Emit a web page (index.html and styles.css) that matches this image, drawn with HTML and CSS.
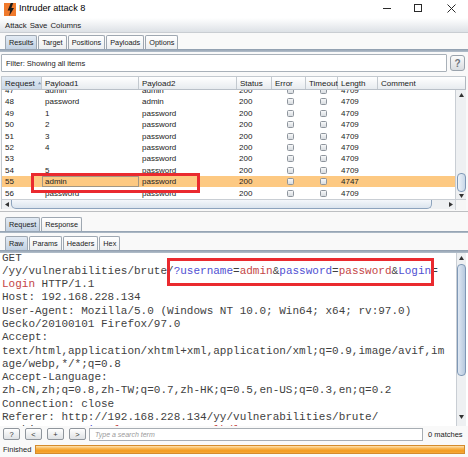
FILE: index.html
```html
<!DOCTYPE html>
<html>
<head>
<meta charset="utf-8">
<title>Intruder attack 8</title>
<link rel="stylesheet" href="styles.css">
</head>
<body>
<div class="window">
  <header class="titlebar">
    <svg class="app-icon" width="12" height="13" viewBox="0 0 12 13"><rect x="0" y="0" width="12" height="13" fill="#f07a2c"/><path d="M6.8 0 L9.2 0 L7.4 5 L10 5 L5.2 13 L6.2 7.4 L3.6 7.4 Z" fill="#1b1b1b"/></svg>
    <span class="title">Intruder attack 8</span>
    <div class="controls">
      <span class="ctl ctl-min"><svg width="8" height="8" viewBox="0 0 8 8"><path d="M0 4.5H8" stroke="#2a2a2a" stroke-width="1"/></svg></span>
      <span class="ctl ctl-max"><svg width="8" height="8" viewBox="0 0 8 8"><rect x="0.5" y="0.5" width="7" height="7" fill="none" stroke="#2a2a2a" stroke-width="1"/></svg></span>
      <span class="ctl ctl-close"><svg width="9" height="9" viewBox="0 0 9 9"><path d="M0.5 0.5L8.5 8.5M8.5 0.5L0.5 8.5" stroke="#2a2a2a" stroke-width="1"/></svg></span>
    </div>
  </header>

  <nav class="menubar"><span>Attack</span><span>Save</span><span>Columns</span></nav>

  <div class="tabstrip main-tabs">
    <span class="tab active">Results</span>
    <span class="tab">Target</span>
    <span class="tab">Positions</span>
    <span class="tab">Payloads</span>
    <span class="tab">Options</span>
  </div>
  <div class="tabline thick"></div>

  <div class="filter-row">
    <div class="filter">Filter: Showing all items</div>
    <div class="help">?</div>
  </div>

  <div class="table">
    <div class="thead">
      <div class="th sorted">Request <svg class="sort" width="5" height="4" viewBox="0 0 5 4"><path d="M2.5 0L5 4H0Z" fill="#7b91ab"/></svg></div>
      <div class="th">Payload1</div>
      <div class="th">Payload2</div>
      <div class="th">Status</div>
      <div class="th">Error</div>
      <div class="th">Timeout</div>
      <div class="th">Length</div>
      <div class="th last">Comment</div>
    </div>
    <div class="tbody-wrap">
      <div class="tbody">
        <div class="rows">
          <div class="row"><span>47</span><span>admin</span><span>admin</span><span>200</span><span class="c"><i class="cb"></i></span><span class="c"><i class="cb"></i></span><span>4709</span><span></span></div>
          <div class="row"><span>48</span><span>password</span><span>admin</span><span>200</span><span class="c"><i class="cb"></i></span><span class="c"><i class="cb"></i></span><span>4709</span><span></span></div>
          <div class="row"><span>49</span><span>1</span><span>password</span><span>200</span><span class="c"><i class="cb"></i></span><span class="c"><i class="cb"></i></span><span>4709</span><span></span></div>
          <div class="row"><span>50</span><span>2</span><span>password</span><span>200</span><span class="c"><i class="cb"></i></span><span class="c"><i class="cb"></i></span><span>4709</span><span></span></div>
          <div class="row"><span>51</span><span>3</span><span>password</span><span>200</span><span class="c"><i class="cb"></i></span><span class="c"><i class="cb"></i></span><span>4709</span><span></span></div>
          <div class="row"><span>52</span><span>4</span><span>password</span><span>200</span><span class="c"><i class="cb"></i></span><span class="c"><i class="cb"></i></span><span>4709</span><span></span></div>
          <div class="row"><span>53</span><span></span><span>password</span><span>200</span><span class="c"><i class="cb"></i></span><span class="c"><i class="cb"></i></span><span>4709</span><span></span></div>
          <div class="row"><span>54</span><span>5</span><span>password</span><span>200</span><span class="c"><i class="cb"></i></span><span class="c"><i class="cb"></i></span><span>4709</span><span></span></div>
          <div class="row sel"><span>55</span><span class="focus">admin</span><span>password</span><span>200</span><span class="c"><i class="cb"></i></span><span class="c"><i class="cb"></i></span><span>4747</span><span></span></div>
          <div class="row"><span>56</span><span>password</span><span>password</span><span>200</span><span class="c"><i class="cb"></i></span><span class="c"><i class="cb"></i></span><span>4709</span><span></span></div>
        </div>
      </div>
      <div class="vscroll small">
        <span class="arr up"><svg width="5" height="4" viewBox="0 0 5 4"><path d="M2.5 0L5 4H0Z" fill="#333"/></svg></span>
        <span class="track"></span>
        <span class="thumb"></span>
        <span class="arr down"><svg width="5" height="4" viewBox="0 0 5 4"><path d="M0 0H5L2.5 4Z" fill="#333"/></svg></span>
      </div>
    </div>
    <div class="hscroll">
      <span class="harr"><svg width="4" height="5" viewBox="0 0 4 5"><path d="M4 0V5L0 2.5Z" fill="#333"/></svg></span>
      <span class="hthumb"></span>
      <span class="hgrip"></span>
      <span class="harr right"><svg width="4" height="5" viewBox="0 0 4 5"><path d="M0 0V5L4 2.5Z" fill="#333"/></svg></span>
      <span class="corner"></span>
    </div>
  </div>

  <div class="splitter"></div>

  <div class="tabstrip sub-tabs">
    <span class="tab active">Request</span>
    <span class="tab">Response</span>
  </div>
  <div class="tabline"></div>

  <div class="tabstrip raw-tabs">
    <span class="tab active">Raw</span>
    <span class="tab">Params</span>
    <span class="tab">Headers</span>
    <span class="tab">Hex</span>
  </div>
  <div class="tabline thick"></div>

  <div class="editor">
<pre class="raw">GET
/yy/vulnerabilities/brute/<span class="k">?username</span>=<span class="v">admin</span>&amp;<span class="k">password</span>=<span class="v">password</span>&amp;<span class="k">Login</span>=
<span class="v">Login</span> HTTP/1.1
Host: 192.168.228.134
User-Agent: Mozilla/5.0 (Windows NT 10.0; Win64; x64; rv:97.0)
Gecko/20100101 Firefox/97.0
Accept:
text/html,application/xhtml+xml,application/xml;q=0.9,image/avif,im
age/webp,*/*;q=0.8
Accept-Language:
zh-CN,zh;q=0.8,zh-TW;q=0.7,zh-HK;q=0.5,en-US;q=0.3,en;q=0.2
Connection: close
Referer: http://192.168.228.134/yy/vulnerabilities/brute/
Cookie: <span class="k">security</span>=<span class="v">low</span>; <span class="k">PHPSESSID</span>=<span class="v">lkdl0153c6a9e7e6c0e2a1</span></pre>
    <div class="vscroll big">
      <span class="arr up"><svg width="5" height="4" viewBox="0 0 5 4"><path d="M2.5 0L5 4H0Z" fill="#333"/></svg></span>
      <span class="thumb"></span>
      <span class="track"></span>
      <span class="arr down"><svg width="5" height="4" viewBox="0 0 5 4"><path d="M0 0H5L2.5 4Z" fill="#333"/></svg></span>
    </div>
  </div>

  <div class="searchbar">
    <span class="btn">?</span>
    <span class="btn">&lt;</span>
    <span class="btn">+</span>
    <span class="btn">&gt;</span>
    <span class="search">Type a search term</span>
    <span class="matches">0 matches</span>
  </div>

  <div class="statusbar">
    <span class="status-label">Finished</span>
    <span class="progress"></span>
  </div>

  <div class="mark mark-row"></div>
  <div class="mark mark-query"></div>
</div>
</body>
</html>
```

FILE: styles.css
```css
* { box-sizing: border-box; margin: 0; padding: 0; }
html, body { width: 468px; height: 457px; overflow: hidden; }
body {
  background: #ffffff;
  font-family: "Liberation Sans", Arial, sans-serif;
  font-size: 7.5px;
  color: #1c1c1c;
}
.window {
  position: relative;
  width: 468px;
  height: 457px;
  background: #f9f9f9;
  display: flex;
  flex-direction: column;
}

/* title bar */
.titlebar {
  height: 18px;
  flex: none;
  background: #ffffff;
  display: flex;
  align-items: flex-start;
  padding-left: 4px;
  padding-top: 3px;
}
.app-icon { display: block; margin-right: 3px; }
.title { font-size: 9.2px; color: #000; line-height: 11px; }
.controls { margin-left: auto; display: flex; margin-top: 1px; }
.ctl { display: flex; justify-content: center; height: 10px; }
.ctl svg { display: block; }
.ctl-min { width: 31px; }
.ctl-max { width: 32px; }
.ctl-close { width: 34px; }

/* menu */
.menubar {
  height: 15px;
  flex: none;
  background: linear-gradient(#ffffff, #dde1e6);
  border-bottom: 1px solid #c9cdd2;
  display: flex;
  align-items: center;
  gap: 3px;
  padding-left: 5px;
  font-size: 7.8px;
}

/* tabs */
.tabstrip { display: flex; align-items: flex-end; padding-left: 5px; flex: none; }
.main-tabs { height: 16px; }
.sub-tabs { height: 15px; }
.raw-tabs { height: 14px; margin-top: 3px; }
.tab {
  height: 14px;
  padding: 0 3px;
  margin-right: 1px;
  border: 1px solid #9ea7b1;
  border-bottom: none;
  border-radius: 2px 2px 0 0;
  background: linear-gradient(#ffffff, #eceef0);
  display: flex;
  align-items: center;
  font-size: 7.3px;
  color: #1a1a1a;
}
.tab.active { background: linear-gradient(#e3ebf4, #c2d1e2); }
.tabline { height: 2px; flex: none; background: linear-gradient(#8e9cad, #b3bfcb); }
.tabline.thick { height: 3px; }

/* filter */
.filter-row {
  display: flex;
  height: 18px;
  margin-top: 2px;
  padding-left: 1px;
  flex: none;
}
.filter {
  width: 446px;
  border: 1px solid #a9b1b9;
  border-radius: 1px;
  background: #ffffff;
  display: flex;
  align-items: center;
  padding-left: 4px;
}
.help {
  width: 15px;
  height: 16px;
  margin: 1px 0 0 3px;
  border: 1px solid #9aa3ad;
  border-radius: 3px;
  background: linear-gradient(#fbfbfb, #d9dde1);
  color: #6f757c;
  font-weight: bold;
  font-size: 10px;
  display: flex;
  align-items: center;
  justify-content: center;
}

/* table */
.table {
  width: 465px;
  margin: 4px 0 0 1px;
  flex: none;
  display: flex;
  flex-direction: column;
}
.thead {
  height: 14px;
  display: grid;
  grid-template-columns: 40px 97px 98px 35px 34px 32px 40px 1fr;
  background: linear-gradient(#ffffff, #e7ebef);
  border-top: 1px solid #c3c9cf;
  border-bottom: 1px solid #b9c0c8;
  border-left: 1px solid #c3c9cf;
}
.th {
  display: flex;
  align-items: center;
  padding-left: 3px;
  border-right: 1px solid #c3c9cf;
  font-size: 8px;
  color: #1a1a1a;
}
.th.last { border-right: 1px solid #b0b7bf; }
.th.sorted { background: linear-gradient(#e3ebf4, #c9d7e7); }
.sort { margin-left: 3px; }
.tbody-wrap {
  height: 109px;
  display: flex;
  border-left: 1px solid #c3c9cf;
}
.tbody { width: 454px; overflow: hidden; background: #ffffff; }
.rows { margin-top: -5.2px; }
.row {
  height: 11.4px;
  display: grid;
  grid-template-columns: 40px 97px 98px 35px 34px 32px 40px 1fr;
  font-size: 8px;
  color: #222;
}
.row > span { display: flex; align-items: center; padding-left: 3px; white-space: nowrap; }
.row > span:nth-child(4) { padding-left: 2px; }
.row > span.c { justify-content: center; padding-left: 2px; }
.row.sel { background: #fdc982; }
.row .focus { border: 1px solid #a39682; padding-left: 2px; }
.cb {
  display: block;
  width: 7px;
  height: 7px;
  border: 1px solid #8e959d;
  border-radius: 1.5px;
  background: linear-gradient(#f7f8f9, #d8dce0);
}

/* scrollbars */
.vscroll {
  width: 11px;
  display: flex;
  flex-direction: column;
  align-items: center;
  background: #eef0f2;
  border-left: 1px solid #c9ced4;
}
.vscroll .arr { height: 8px; display: flex; align-items: center; justify-content: center; flex: none; }
.vscroll .track { flex: 1; }
.vscroll .thumb {
  width: 9px;
  flex: none;
  border: 1px solid #7f98b6;
  border-radius: 4px;
  background: linear-gradient(90deg, #eef3f9, #c9d8e9);
}
.vscroll.small .arr.up { height: 10px; }
.vscroll.small .thumb { height: 19px; }
.vscroll.small .arr.down { height: 7px; }
.vscroll.big { height: 173px; width: 10px; }
.vscroll.big .arr.up { height: 10px; }
.vscroll.big .thumb { height: 112px; margin-top: 1px; background: linear-gradient(90deg, #dfe8f3, #b7c9de); }
.vscroll.big .arr.down { height: 10px; margin-bottom: 4px; }

.hscroll {
  height: 10px;
  display: flex;
  align-items: center;
  background: #eef0f2;
  border-top: 1px solid #c9ced4;
  border-left: 1px solid #c3c9cf;
}
.harr { width: 9px; height: 9px; display: flex; align-items: center; justify-content: center; flex: none; }
.hthumb {
  width: 421px;
  height: 9px;
  flex: none;
  border: 1px solid #8da3bd;
  border-top: none;
  border-radius: 0 0 5px 5px;
  background: linear-gradient(#f4f7fb, #dbe4ee);
}
.hgrip { width: 15px; flex: none; }
.harr.right { width: 8px; }
.corner { flex: 1; height: 10px; background: #f6f6f6; border-left: 1px solid #d0d4d8; }

.splitter {
  height: 7px;
  flex: none;
  background: linear-gradient(transparent 2px, #bdbfc2 2px, #bdbfc2 3px, transparent 3px);
}

/* editor */
.editor {
  height: 173px;
  flex: none;
  display: flex;
  background: #ffffff;
}
.raw {
  width: 456px;
  overflow: hidden;
  padding-left: 2px;
  font-family: "Liberation Mono", "Courier New", monospace;
  font-size: 11px;
  line-height: 13.3px;
  color: #3f3f3f;
  margin-top: -1.5px;
  white-space: pre;
}
.raw .k { color: #5050d2; }
.raw .v { color: #c44646; }

/* search */
.searchbar {
  height: 16px;
  flex: none;
  display: flex;
  align-items: center;
  padding-left: 3px;
}
.btn {
  width: 17px;
  height: 12px;
  margin-right: 5px;
  border: 1px solid #8f959c;
  border-radius: 2px;
  background: linear-gradient(#ffffff, #dfe2e5);
  display: flex;
  align-items: center;
  justify-content: center;
  font-size: 7.5px;
  color: #333;
}
.btn:nth-child(4) { margin-right: 3px; }
.search {
  width: 334px;
  height: 13px;
  border: 1px solid #a7adb3;
  background: #ffffff;
  display: flex;
  align-items: center;
  padding-left: 5px;
  font-style: italic;
  color: #9a9a9a;
  font-size: 7px;
}
.matches { margin-left: 5px; font-size: 7.5px; color: #1a1a1a; }

/* status */
.statusbar {
  height: 15px;
  flex: none;
  display: flex;
  align-items: center;
}
.status-label { width: 35px; padding-left: 3px; font-size: 7.5px; }
.progress {
  width: 430px;
  height: 9px;
  border: 1px solid #d48b2c;
  background: linear-gradient(#fde2b2 0%, #f8b24a 40%, #f29a1d 70%, #f6ab3d 100%);
}

/* annotation boxes */
.mark { position: absolute; border: 3px solid #ea2a2f; }
.mark-row { left: 31px; top: 173px; width: 169px; height: 20px; }
.mark-query { left: 167px; top: 258px; width: 267px; height: 28px; }
```
